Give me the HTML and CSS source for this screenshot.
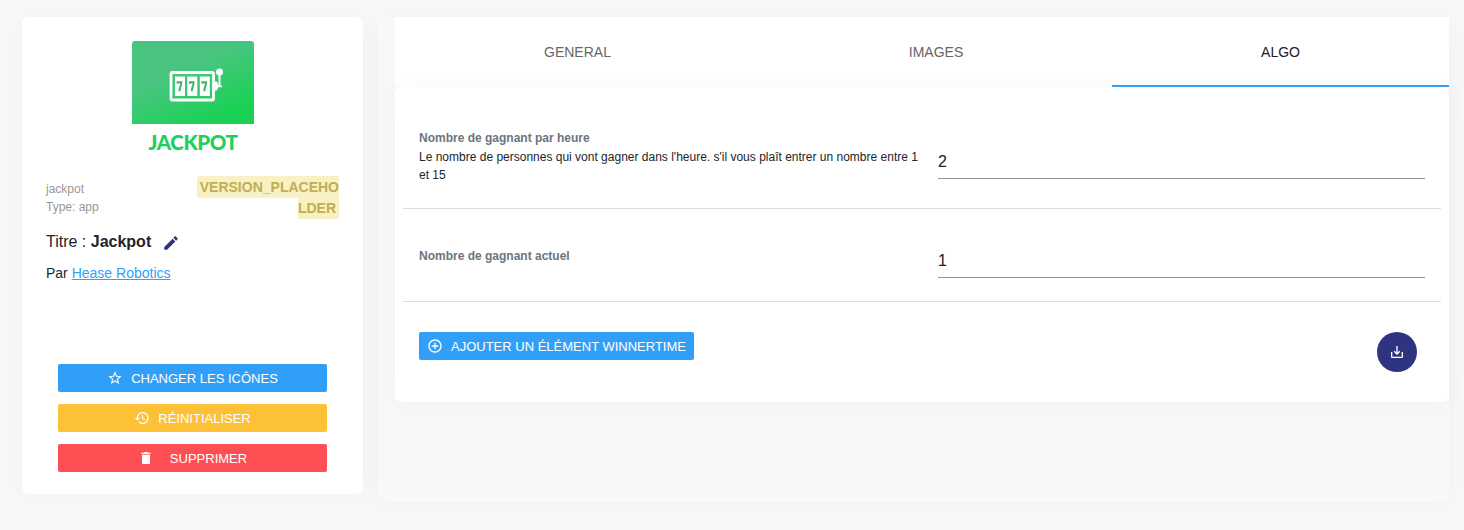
FILE: index.html
```html
<!DOCTYPE html>
<html lang="fr">
<head>
<meta charset="utf-8">
<title>Jackpot</title>
<link rel="stylesheet" href="styles.css">
</head>
<body>
<div class="layout">
  <aside class="card app-card">
    <div class="logo">
      <div class="logo-art">
        <svg width="122" height="83" viewBox="0 0 122 83">
          <rect x="39" y="31.500" width="42.500" height="27.500" rx="1.500" fill="none" stroke="#fff" stroke-width="2.800"/>
          <path fill="#fff" d="M43 35.500h10v19.500h-10zM55.300 35.500h10v19.500h-10zM67.800 35.500h10v19.500h-10zM82 40.500h2.500l1.500 2v5l-1.500 2H82zM86.500 32h2v12.500h1.500v1.800H85v-1.800h1.500z"/>
          <circle cx="87.500" cy="31" r="3.500" fill="#fff"/>
          <path fill="none" stroke="#39b66c" stroke-width="2" d="M45.700 42.800v-1.500h3.600c0 3.300-1.800 5-1.800 9M58 42.800v-1.500h3.600c0 3.300-1.800 5-1.800 9M70.500 42.800v-1.500h3.600c0 3.300-1.800 5-1.800 9"/>
        </svg>
      </div>
      <div class="logo-name">JACKPOT</div>
    </div>
    <div class="meta">
      <div class="meta-info">jackpot<br>Type: app</div>
      <div class="meta-version"><span class="badge">VERSION_PLACEHOLDER</span></div>
    </div>
    <div class="title">Titre : <b>Jackpot</b>
      <svg class="pencil" width="18" height="18" viewBox="0 0 24 24"><path d="M3 17.250V21h3.750L17.810 9.940l-3.750-3.750L3 17.250zM20.710 7.040c.39-.39.39-1.020 0-1.410l-2.340-2.340c-.39-.39-1.020-.39-1.410 0l-1.830 1.830 3.750 3.750 1.830-1.830z"/></svg>
    </div>
    <div class="author">Par <a href="#">Hease Robotics</a></div>
    <div class="actions">
      <button class="btn btn-blue"><svg width="16" height="16" viewBox="0 0 24 24"><path d="M22 9.240l-7.190-.62L12 2 9.190 8.630 2 9.240l5.460 4.730L5.820 21 12 17.270 18.180 21l-1.630-7.030L22 9.240zM12 15.400l-3.760 2.270 1-4.280-3.320-2.880 4.380-.38L12 6.100l1.710 4.040 4.380.38-3.320 2.880 1 4.280L12 15.400z"/></svg>CHANGER LES ICÔNES</button>
      <button class="btn btn-yellow"><svg width="16" height="16" viewBox="0 0 24 24"><path d="M13 3c-4.970 0-9 4.030-9 9H1l3.890 3.890.07.14L9 12H6c0-3.870 3.130-7 7-7s7 3.130 7 7-3.130 7-7 7c-1.930 0-3.680-.79-4.940-2.060l-1.420 1.420C8.270 19.990 10.510 21 13 21c4.970 0 9-4.030 9-9s-4.030-9-9-9zm-1 5v5l4.280 2.540.72-1.210-3.500-2.080V8H12z"/></svg>RÉINITIALISER</button>
      <button class="btn btn-red"><svg width="16" height="16" viewBox="0 0 24 24"><path d="M6 19c0 1.100.9 2 2 2h8c1.100 0 2-.9 2-2V7H6v12zM19 4h-3.500l-1-1h-5l-1 1H5v2h14V4z"/></svg>SUPPRIMER</button>
    </div>
  </aside>
  <main class="panel">
    <nav class="tabs">
      <a class="tab tab-general">GENERAL</a>
      <a class="tab tab-images">IMAGES</a>
      <a class="tab tab-algo">ALGO</a>
    </nav>
    <section class="card form">
      <div class="row row-first">
        <div class="row-label"><b>Nombre de gagnant par heure</b><p>Le nombre de personnes qui vont gagner dans l'heure. s'il vous plaît entrer un nombre entre 1 et 15</p></div>
        <input class="field" value="2">
      </div>
      <div class="row row-second">
        <div class="row-label"><b>Nombre de gagnant actuel</b></div>
        <input class="field" value="1">
      </div>
      <div class="form-footer">
        <button class="btn btn-blue btn-add"><svg width="16" height="16" viewBox="0 0 24 24"><path d="M13 7h-2v4H7v2h4v4h2v-4h4v-2h-4V7zm-1-5C6.480 2 2 6.480 2 12s4.480 10 10 10 10-4.480 10-10S17.520 2 12 2zm0 18c-4.410 0-8-3.590-8-8s3.590-8 8-8 8 3.590 8 8-3.590 8-8 8z"/></svg>AJOUTER UN ÉLÉMENT WINNERTIME</button>
        <button class="save" aria-label="Enregistrer"><svg width="16" height="16" viewBox="0 0 24 24"><path d="M19 12v7H5v-7H3v7c0 1.100.9 2 2 2h14c1.100 0 2-.9 2-2v-7h-2zm-6 .670l2.590-2.580L17 11.500l-5 5-5-5 1.410-1.410L11 12.670V3h2z"/></svg></button>
      </div>
    </section>
  </main>
</div>
</body>
</html>
```
FILE: styles.css
```css
* { box-sizing: border-box; }
body {
  margin: 0;
  background: #f8f8fa;
  color: #212529;
  font-family: "Liberation Sans", Arial, sans-serif;
  height: 530px;
  overflow: hidden;
}
.layout { display: flex; gap: 15px; padding: 17px 15px 0 22px; align-items: flex-start; }
.card { background: #fff; border-radius: 6px; box-shadow: 0 2px 25px rgba(0, 0, 0, .035); }
.app-card { width: 341px; height: 477px; padding: 24px; }
.logo { width: 122px; height: 122px; margin: 0 auto; }
.logo-art {
  height: 83px;
  border-radius: 3px 3px 0 0;
  background: linear-gradient(155deg, #4ac581 36%, #1bd155 82%);
}
.logo-art svg { display: block; }
.logo-name {
  padding: 5px 0 0 1px;
  text-align: center;
  font: 900 20.500px/26px Lato, sans-serif;
  color: #20ce5b;
  letter-spacing: -.4px;
}
.meta { display: flex; justify-content: space-between; margin-top: 13px; }
.meta-info { font-size: 12px; line-height: 18px; color: #999; padding-top: 4px; }
.meta-version { width: 146px; padding-top: 1px; text-align: right; font-size: 14px; line-height: 21px; word-break: break-all; }
.badge { background: #f9f0c3; color: #c0ae55; font-weight: bold; padding: 3px; border-radius: 3px; }
.title { margin-top: 11px; font-size: 16px; line-height: 24px; display: flex; align-items: center; white-space: pre-wrap; }
.pencil { margin: 2px 0 0 11px; fill: #2e3480; }
.author { margin-top: 9px; font-size: 14px; line-height: 21px; }
.author a { color: #319ff8; }
.actions { display: grid; gap: 12px; padding: 0 12px; margin-top: 80px; }
.btn {
  display: flex;
  align-items: center;
  justify-content: center;
  height: 28px;
  padding: 1px 0 0;
  border: 0;
  border-radius: 2px;
  color: #fff;
  font: 13px "Liberation Sans", Arial, sans-serif;
}
.btn svg { fill: #fff; margin: -1px 8px 0 0; }
.btn-blue { background: #319ff8; }
.btn-yellow { background: #fdc137; }
.btn-red { background: #fe4f54; }
.btn-red svg { margin-right: 16px; }
.panel {
  width: 1071px;
  height: 485px;
  padding-left: 17px;
  border-radius: 6px;
  box-shadow: 0 2px 25px rgba(0, 0, 0, .035);
}
.tabs { display: flex; height: 70px; background: #fff; font-size: 14px; }
.tab { display: flex; align-items: center; justify-content: center; color: #666; }
.tab-general { width: 364px; padding-left: 1px; }
.tab-images { width: 353px; padding-left: 1px; }
.tab-algo { width: 337px; color: #212121; border-bottom: 2px solid #319ff8; padding-top: 2px; }
.form { height: 315px; padding: 0 8px; }
.row { display: flex; padding: 0 16px; border-bottom: 1px solid #dedede; }
.row-first { height: 122px; padding-top: 42px; }
.row-second { height: 93px; padding-top: 38px; }
.row-label { width: 519px; padding-right: 16px; font-size: 12px; line-height: 18px; }
.row-label b { display: block; color: #6c757d; }
.row-label p { margin: 1px 0 0; }
.field {
  flex: 1;
  min-width: 0;
  height: 34px;
  align-self: flex-end;
  padding: 0;
  border: 0;
  border-bottom: 1px solid #949494;
  outline: 0;
  background: transparent;
  color: #212121;
  font: 16px "Liberation Sans", Arial, sans-serif;
}
.row-second .field { margin-bottom: 23px; }
.row-first .field { margin-bottom: 29px; }
.form-footer { display: flex; justify-content: space-between; padding: 30px 24px 0 16px; }
.btn-add { width: 275px; }
.save {
  width: 40px;
  height: 40px;
  padding: 0;
  border: 0;
  border-radius: 50%;
  background: #2e3480;
  display: flex;
  align-items: center;
  justify-content: center;
}
.save svg { fill: #fff; }
```
